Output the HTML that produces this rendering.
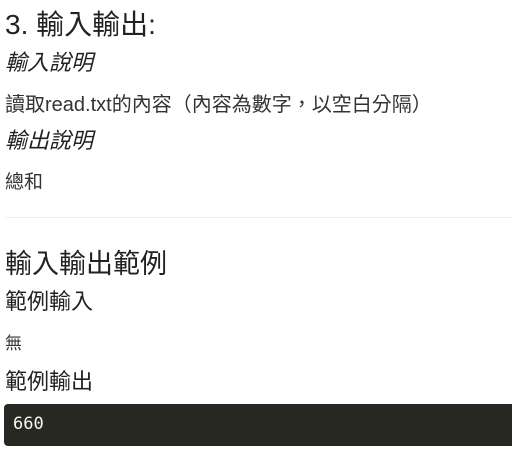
<!DOCTYPE html>
<html><head><meta charset="utf-8"><style>
body{margin:0;width:512px;height:456px;overflow:hidden;background:#fff;color:#333;font-family:"Liberation Sans","Noto Sans CJK TC",sans-serif;}
.a{position:absolute;left:5px;white-space:nowrap;}
</style></head><body>
<div class="a" style="top:3px;font-size:28px;color:#222;">3. 輸入輸出:</div>
<div class="a" style="top:45px;font-size:22px;font-style:italic;color:#222;">輸入說明</div>
<div class="a" style="top:88px;font-size:20px;">讀取read.txt的內容（內容為數字，以空白分隔）</div>
<div class="a" style="top:123px;font-size:22px;font-style:italic;color:#222;">輸出說明</div>
<div class="a" style="top:167px;font-size:19px;">總和</div>
<div style="position:absolute;left:5px;right:0;top:217px;border-top:1px solid #eee;"></div>
<div class="a" style="top:242px;font-size:27px;color:#222;">輸入輸出範例</div>
<div class="a" style="top:284px;font-size:22px;color:#222;">範例輸入</div>
<div class="a" style="top:329px;font-size:17px;">無</div>
<div class="a" style="top:364px;font-size:22px;color:#222;">範例輸出</div>
<div style="position:absolute;left:4px;top:404px;width:520px;height:42px;background:#272822;border-radius:4px;"></div>
<div class="a" style="left:13px;top:414px;font-family:'DejaVu Sans Mono',monospace;font-size:17px;color:#f8f8f2;">660</div>
</body></html>
